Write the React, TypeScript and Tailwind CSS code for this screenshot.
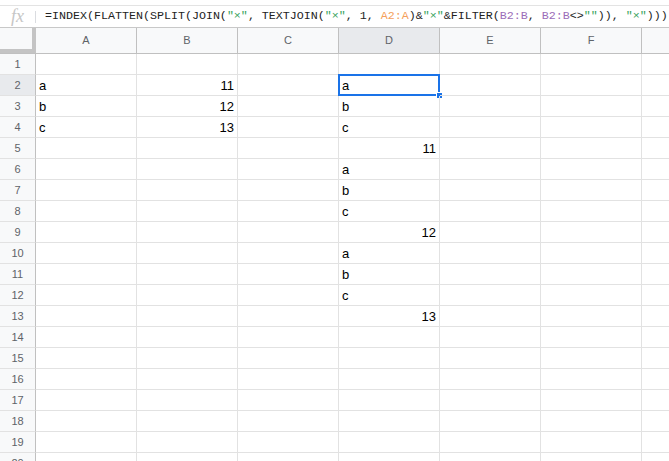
import React from "react";

const cols = ["A", "B", "C", "D", "E", "F"];

const data: Record<string, string> = {
  A2: "a", A3: "b", A4: "c",
  B2: "11", B3: "12", B4: "13",
  D2: "a", D3: "b", D4: "c", D5: "11",
  D6: "a", D7: "b", D8: "c", D9: "12",
  D10: "a", D11: "b", D12: "c", D13: "13",
};

const STR = "text-[#36a35b]";
const R1 = "text-[#f5a05a]";
const R2 = "text-[#9b6cb8]";

function FormulaBar() {
  return (
    <div className="mt-[5px] h-[23px] border-t border-b border-t-[#e3e3e3] border-b-[#c8c8c8] flex items-center">
      <div className="w-[35px] h-full flex items-center justify-center">
        <span className="italic text-[18px] text-[#c6c6c6] leading-none -mt-[2px]" style={{ fontFamily: '"Liberation Serif", serif' }}>fx</span>
      </div>
      <div className="w-px h-[12px] bg-[#dadce0]" />
      <div className="pl-[9px] text-[11.67px] text-[#222] whitespace-nowrap" style={{ fontFamily: '"Liberation Mono", monospace' }}>
        =INDEX(FLATTEN(SPLIT(JOIN(<span className={STR}>"×"</span>, TEXTJOIN(<span className={STR}>"×"</span>, 1, <span className={R1}>A2:A</span>)&amp;<span className={STR}>"×"</span>&amp;FILTER(<span className={R2}>B2:B</span>, <span className={R2}>B2:B</span>&lt;&gt;<span className={STR}>""</span>)), <span className={STR}>"×"</span>)))
      </div>
    </div>
  );
}

function HeaderRow() {
  return (
    <div className="flex h-[26px] border-b border-[#c0c0c0] bg-[#f8f9fa] text-[11px] text-[#5f6368]">
      <div className="w-[36px] h-[25px] -mb-px border-r-[4px] border-b-[4px] border-[#c4c4c4] shrink-0" />
      {cols.map((c) => (
        <div key={c} className={`w-[101px] shrink-0 border-r border-[#c0c0c0] flex items-center justify-center ${c === "D" ? "bg-[#e8eaed]" : ""}`}>
          {c}
        </div>
      ))}
      <div className="flex-1" />
    </div>
  );
}

function Row({ n }: { n: number }) {
  return (
    <div className="flex h-[21px]">
      <div className={`w-[36px] shrink-0 border-r border-b border-r-[#c0c0c0] border-b-[#e2e2e2] flex items-center justify-center text-[11px] text-[#5f6368] ${n === 2 ? "bg-[#e8eaed]" : "bg-[#f8f9fa]"}`}>
        {n}
      </div>
      {cols.map((c) => {
        const v = data[c + n];
        const isNum = v !== undefined && /^\d+$/.test(v);
        const selected = c === "D" && n === 2;
        return (
          <div key={c} className={`relative w-[101px] shrink-0 border-r border-b border-[#e2e2e2] flex items-center pt-px text-[13px] text-black px-[3px] ${isNum ? "justify-end" : ""}`}>
            {v}
            {selected && (
              <>
                <div className="absolute -left-px -top-px w-[102px] h-[22px] border-2 border-[#1a73e8]" />
                <div className="absolute right-[-4px] bottom-[-4px] w-[7px] h-[7px] bg-[#1a73e8] border border-white" />
              </>
            )}
          </div>
        );
      })}
      <div className="flex-1 border-b border-[#e2e2e2]" />
    </div>
  );
}

export default function App() {
  const rows = Array.from({ length: 20 }, (_, i) => i + 1);
  return (
    <div className="w-[669px] h-[461px] overflow-hidden bg-white" style={{ fontFamily: '"Liberation Sans", Arial, sans-serif' }}>
      <FormulaBar />
      <HeaderRow />
      {rows.map((n) => (
        <Row key={n} n={n} />
      ))}
    </div>
  );
}
